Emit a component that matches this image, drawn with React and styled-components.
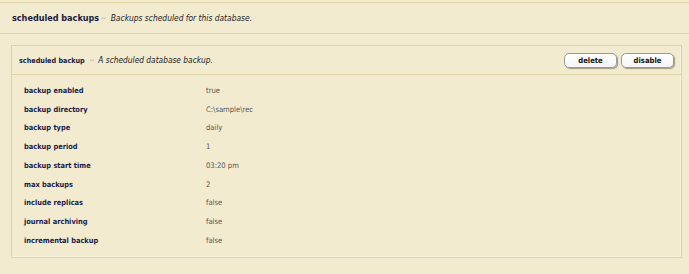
import React from "react";
import styled, { createGlobalStyle } from "styled-components";

const Global = createGlobalStyle`
  html, body { margin: 0; padding: 0; background: #f3ebcf; }
  body { font-family: "DejaVu Sans", "Liberation Sans", Arial, sans-serif; font-stretch: condensed; }
`;

const Page = styled.div`
  width: 689px;
  height: 274px;
  box-sizing: border-box;
  padding-top: 2px;
  background: #f3ebcf;
`;

const Section = styled.section`
  border-top: 1px solid #e2d4a4;
`;

const SectionHeader = styled.div`
  height: 30px;
  display: flex;
  align-items: center;
  padding-left: 12px;
  border-bottom: 1px solid #e2d4a4;
`;

const Title = styled.span`
  font-weight: bold;
  font-size: ${(p) => p.size}px;
  color: #1a1a3a;
`;

const Dash = styled.span`
  font-size: 7px;
  color: #777;
  margin: 0 ${(p) => p.after}px 0 ${(p) => p.before}px;
`;

const Desc = styled.span`
  font-style: italic;
  font-size: ${(p) => p.size}px;
  color: #222;
`;

const Body = styled.div`
  padding: 11px 7px 0 11px;
`;

const Card = styled.div`
  border: 1px solid #e0d2a2;
  box-shadow: inset -1px -1px 0 #f8f2dc;
  padding-bottom: 7px;
`;

const CardHeader = styled.div`
  height: 28px;
  display: flex;
  align-items: center;
  padding: 0 7px 0 7px;
  border-bottom: 1px solid #e2d4a4;
`;

const Spacer = styled.div`
  flex: 1;
`;

const Buttons = styled.div`
  display: flex;
  gap: 4px;
`;

const Button = styled.button`
  width: 53px;
  height: 15px;
  padding: 0;
  border: 1px solid #9a9a9a;
  border-radius: 5px;
  background: linear-gradient(#ffffff, #f4f4f4);
  box-shadow: 1px 1px 1px rgba(0, 0, 0, 0.35);
  font-family: "DejaVu Sans", "Liberation Sans", Arial, sans-serif;
  font-stretch: condensed;
  font-weight: bold;
  font-size: 7.6px;
  color: #111;
`;

const Rows = styled.div`
  padding: 6px 0 0 12px;
`;

const Row = styled.div`
  display: grid;
  grid-template-columns: 182px 1fr;
  height: 18.75px;
  align-items: center;
`;

const Label = styled.span`
  font-weight: bold;
  font-size: 7.4px;
  color: #1a1a48;
`;

const Value = styled.span`
  font-size: 7.6px;
  color: #555;
`;

const rows = [
  ["backup enabled", "true"],
  ["backup directory", "C:\\sample\\rec"],
  ["backup type", "daily"],
  ["backup period", "1"],
  ["backup start time", "03:20 pm"],
  ["max backups", "2"],
  ["include replicas", "false"],
  ["journal archiving", "false"],
  ["incremental backup", "false"],
];

export default function App() {
  return (
    <>
      <Global />
      <Page>
        <Section>
          <SectionHeader>
            <Title size={9}>scheduled backups</Title>
            <Dash before={2} after={5}>--</Dash>
            <Desc size={8.4}>Backups scheduled for this database.</Desc>
          </SectionHeader>
          <Body>
            <Card>
              <CardHeader>
                <Title size={7.2}>scheduled backup</Title>
                <Dash before={5} after={4}>--</Dash>
                <Desc size={8.3}>A scheduled database backup.</Desc>
                <Spacer />
                <Buttons>
                  <Button>delete</Button>
                  <Button>disable</Button>
                </Buttons>
              </CardHeader>
              <Rows>
                {rows.map(([k, v]) => (
                  <Row key={k}>
                    <Label>{k}</Label>
                    <Value>{v}</Value>
                  </Row>
                ))}
              </Rows>
            </Card>
          </Body>
        </Section>
      </Page>
    </>
  );
}
